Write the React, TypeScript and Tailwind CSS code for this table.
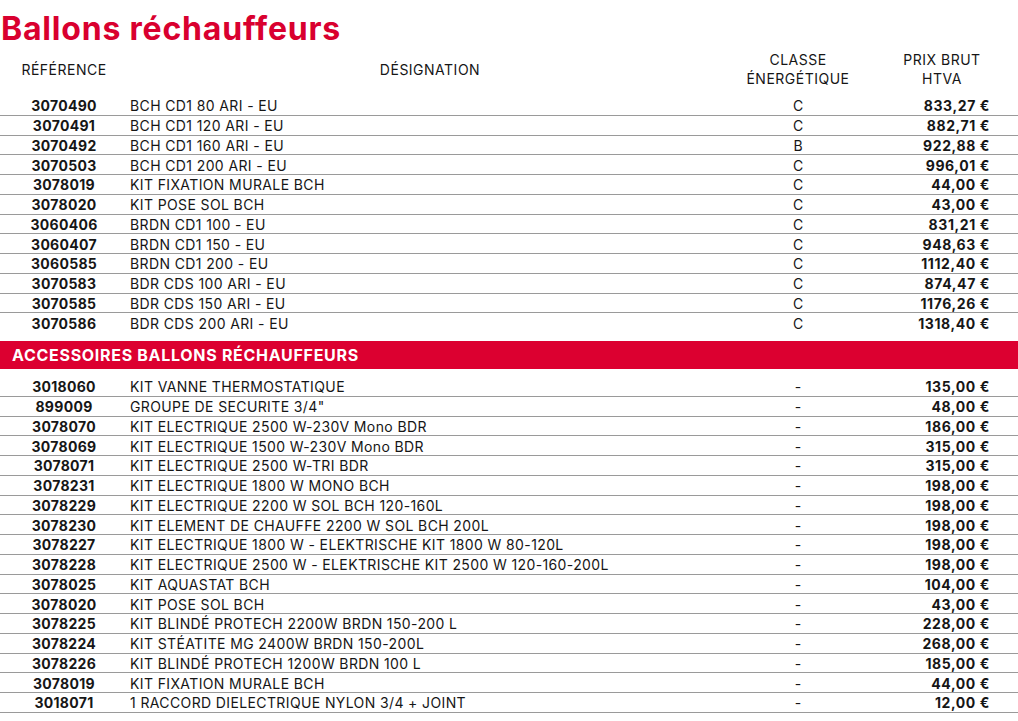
type Row = [string, string, string, string];

const BALLONS: Row[] = [
  ["3070490", "BCH CD1 80 ARI - EU", "C", "833,27 €"],
  ["3070491", "BCH CD1 120 ARI - EU", "C", "882,71 €"],
  ["3070492", "BCH CD1 160 ARI - EU", "B", "922,88 €"],
  ["3070503", "BCH CD1 200 ARI - EU", "C", "996,01 €"],
  ["3078019", "KIT FIXATION MURALE BCH", "C", "44,00 €"],
  ["3078020", "KIT POSE SOL BCH", "C", "43,00 €"],
  ["3060406", "BRDN CD1 100 - EU", "C", "831,21 €"],
  ["3060407", "BRDN CD1 150 - EU", "C", "948,63 €"],
  ["3060585", "BRDN CD1 200 - EU", "C", "1112,40 €"],
  ["3070583", "BDR CDS 100 ARI - EU", "C", "874,47 €"],
  ["3070585", "BDR CDS 150 ARI - EU", "C", "1176,26 €"],
  ["3070586", "BDR CDS 200 ARI - EU", "C", "1318,40 €"],
];

const ACCESSOIRES: Row[] = [
  ["3018060", "KIT VANNE THERMOSTATIQUE", "-", "135,00 €"],
  ["899009", 'GROUPE DE SECURITE 3/4"', "-", "48,00 €"],
  ["3078070", "KIT ELECTRIQUE 2500 W-230V Mono BDR", "-", "186,00 €"],
  ["3078069", "KIT ELECTRIQUE 1500 W-230V Mono BDR", "-", "315,00 €"],
  ["3078071", "KIT ELECTRIQUE 2500 W-TRI BDR", "-", "315,00 €"],
  ["3078231", "KIT ELECTRIQUE 1800 W MONO BCH", "-", "198,00 €"],
  ["3078229", "KIT ELECTRIQUE 2200 W SOL BCH 120-160L", "-", "198,00 €"],
  ["3078230", "KIT ELEMENT DE CHAUFFE 2200 W SOL BCH 200L", "-", "198,00 €"],
  ["3078227", "KIT ELECTRIQUE 1800 W - ELEKTRISCHE KIT 1800 W 80-120L", "-", "198,00 €"],
  ["3078228", "KIT ELECTRIQUE 2500 W - ELEKTRISCHE KIT 2500 W 120-160-200L", "-", "198,00 €"],
  ["3078025", "KIT AQUASTAT BCH", "-", "104,00 €"],
  ["3078020", "KIT POSE SOL BCH", "-", "43,00 €"],
  ["3078225", "KIT BLINDÉ PROTECH 2200W BRDN 150-200 L", "-", "228,00 €"],
  ["3078224", "KIT STÉATITE MG 2400W BRDN 150-200L", "-", "268,00 €"],
  ["3078226", "KIT BLINDÉ PROTECH 1200W BRDN 100 L", "-", "185,00 €"],
  ["3078019", "KIT FIXATION MURALE BCH", "-", "44,00 €"],
  ["3018071", "1 RACCORD DIELECTRIQUE NYLON 3/4 + JOINT", "-", "12,00 €"],
];

function PriceRow({ row, last }: { row: Row; last?: boolean }) {
  const [ref, label, cls, price] = row;
  return (
    <div
      className={`grid h-[19.75px] grid-cols-[128px_1fr_148px_118px] items-center pr-[28px] text-[14px] leading-none ${
        last ? "" : "border-b border-[#9a9a9a]"
      }`}
    >
      <span className="pt-[2px] text-center font-bold tracking-[0.3px]">{ref}</span>
      <span className="pl-[2px] pt-[2px] tracking-[0.38px]">{label}</span>
      <span className="pt-[2px] text-center">{cls}</span>
      <span className="pt-[2px] text-right font-bold tracking-[0.6px]">{price}</span>
    </div>
  );
}

export default function App() {
  return (
    <div className="h-[721px] w-[1018px] overflow-hidden bg-white text-[#161616] [font-family:Inter,'Liberation_Sans',sans-serif]">
      <h1 className="pl-[1px] pt-[9px] text-[32px] font-bold leading-[40px] tracking-[0.8px] text-[#d9002f]">
        Ballons réchauffeurs
      </h1>

      <div className="mb-[9px] mt-[1px] grid h-[37px] grid-cols-[128px_1fr_148px_118px] items-center pr-[28px] text-[14px] leading-[19px] tracking-[0.5px]">
        <span className="text-center">RÉFÉRENCE</span>
        <span className="pl-[8px] text-center">DÉSIGNATION</span>
        <span className="text-center">
          CLASSE
          <br />
          ÉNERGÉTIQUE
        </span>
        <span className="pl-[22px] text-center">
          PRIX BRUT
          <br />
          HTVA
        </span>
      </div>

      <div>
        {BALLONS.map((row, i) => (
          <PriceRow key={row[0] + i} row={row} last={i === BALLONS.length - 1} />
        ))}
      </div>

      <div className="mt-[8px] flex h-[28px] items-center bg-[#dc0030] pl-[12px] text-[16px] font-bold tracking-[0.7px] text-white">
        ACCESSOIRES BALLONS RÉCHAUFFEURS
      </div>

      <div className="mt-[8px]">
        {ACCESSOIRES.map((row, i) => (
          <PriceRow key={row[0] + i} row={row} />
        ))}
      </div>
    </div>
  );
}
